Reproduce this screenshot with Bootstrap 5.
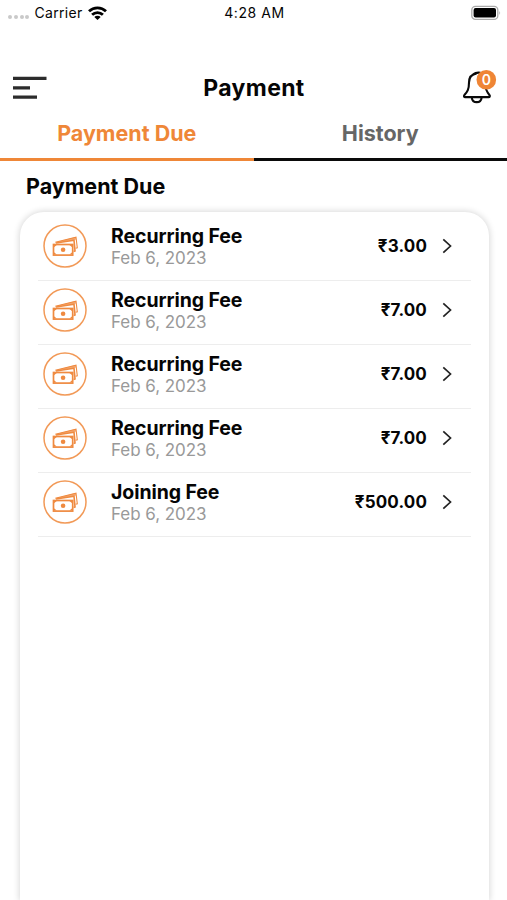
<!DOCTYPE html>
<html lang="en">
<head>
<meta charset="utf-8">
<meta name="viewport" content="width=device-width, initial-scale=1">
<title>Payment</title>
<link href="https://cdn.jsdelivr.net/npm/bootstrap@5.3.0/dist/css/bootstrap.min.css" rel="stylesheet">
<style>
  body { font-family: Inter, "Liberation Sans", sans-serif; color: #050505; background: #fff; height: 900px; overflow: hidden; }
  svg { display: block; flex: none; }
  .status-bar { height: 26px; padding: 0 6px 0 8px; font-size: 14px; line-height: 26px; letter-spacing: .35px; }
  .clock { letter-spacing: .6px; }
  .status-side { flex: 1 1 0; }
  .dots { gap: 1.8px; margin-right: 5px; }
  .dots i { width: 4px; height: 4px; border-radius: 50%; background: #c9c9c9; }
  .top-bar { height: 92px; padding: 32px 9px 0 13px; }
  .page-title { font-size: 23px; font-weight: 700; line-height: 28px; letter-spacing: .35px; padding-right: 3px; }
  .tab-row { height: 43px; }
  .tab-row .nav-link { height: 43px; padding: 0; border-radius: 0; border-bottom: 3px solid #0a0a0a; color: #666; font-size: 21.5px; font-weight: 700; line-height: 30px; letter-spacing: 0; }
  .tab-row .nav-link.active { color: #ef8738; border-color: #ef8738; }
  .section-title { font-size: 21.5px; font-weight: 700; line-height: 28px; letter-spacing: 0; padding: 11px 26px 0; margin-bottom: 12px; }
  .fee-card { flex: 1; margin: 0 18px 0 20px; padding: 5px 18px 0; border: 0; border-radius: 24px 24px 0 0; box-shadow: 0 0 6px 1px rgba(0,0,0,.15); }
  .list-group-flush > .fee-row { height: 64px; padding: 0 19px 6px 5px; border: 0; border-radius: 0; border-bottom: 1px solid #ededed; color: inherit; background: transparent; }
  .list-group-flush > .fee-row:last-child { border-bottom-width: 1px; }
  .fee-name { font-size: 19.5px; font-weight: 700; line-height: 22px; letter-spacing: -.08px; }
  .fee-date { font-size: 17px; line-height: 22px; letter-spacing: -.05px; color: #999; }
  .fee-text { margin-left: 24px; padding-top: 2px; }
  .fee-sum { font-size: 17px; font-weight: 700; margin-right: 15px; padding-top: 2px; letter-spacing: .15px; }
</style>
<script src="https://cdn.jsdelivr.net/npm/bootstrap@5.3.0/dist/js/bootstrap.bundle.min.js"></script>
</head>
<body class="d-flex flex-column">
<svg width="0" height="0" class="position-absolute" aria-hidden="true">
  <symbol id="cash" viewBox="0 0 44 44">
    <circle cx="22" cy="22" r="21" fill="none" stroke="#f29a58" stroke-width="1.5"/>
    <path fill="#f4ab75" d="M12.5 18.2 L32.6 13 L33.2 15.5 L18 18Z"/>
    <g fill="none" stroke="#ef8a40">
      <path d="M12.3 18.2 L33 13.2 L34.3 23.8 L32.6 24.3" stroke-width="1.1"/>
      <path d="M13 19 L31 16.2 L32 27 L30.6 27.4" stroke-width="1.6"/>
      <rect x="10.5" y="20.5" width="19.2" height="10.6" stroke-width="1.7"/>
    </g>
    <path fill="#ef8a40" d="M11 21h2.8l-2.8 2.3zM29.2 21h-2.8l2.8 2.3zM11 30.6h2.8l-2.8-2.3zM29.2 30.6h-2.8l2.8-2.3z"/>
    <circle cx="20.1" cy="25.8" r="2.3" fill="#ef8a40"/>
  </symbol>
  <symbol id="chev" viewBox="0 0 10 16"><path d="M1.3 1.3 L8.5 8 L1.3 14.7" fill="none" stroke="#222" stroke-width="1.7"/></symbol>
</svg>

<div class="status-bar d-flex align-items-center">
  <div class="status-side d-flex align-items-center">
    <span class="dots d-flex pt-2"><i></i><i></i><i></i><i></i></span>
    <span>Carrier</span>
    <svg class="ms-1" width="21" height="15" viewBox="0 0 20 15"><g fill="none" stroke="#000" stroke-width="2.8"><path d="M1.5 5.3 A12.2 12.2 0 0 1 18.5 5.3"/><path d="M4.6 8.7 A7.8 7.8 0 0 1 15.4 8.7"/></g><path d="M10 14 L6.8 11 A4.6 4.6 0 0 1 13.2 11Z"/></svg>
  </div>
  <span class="clock">4:28 AM</span>
  <div class="status-side d-flex justify-content-end">
    <svg width="30" height="16" viewBox="0 0 30 16"><rect x=".8" y="1.3" width="26" height="13" rx="3.6" fill="#fff" stroke="#aaa" stroke-width="1.3"/><rect x="2.6" y="3.1" width="22.4" height="9.4" rx="2"/><path d="M28.3 5.7 Q30 7.8 28.3 9.9Z" fill="#aaa"/></svg>
  </div>
</div>

<header class="top-bar d-flex justify-content-between align-items-center">
  <svg width="36" height="24" viewBox="0 0 36 24" fill="#2c2c2c"><path d="M0 .8h33.5v3.2H0zM0 10.3h17v3.2H0zM0 19.6h24v3.2H0z"/></svg>
  <h1 class="page-title m-0">Payment</h1>
  <svg width="36" height="36" viewBox="0 0 36 36">
    <path d="M14.7 3.4 C9.5 4.3 7 8 7 12.5 C7 19.5 5.4 21.7 2.4 25 C1.6 26.2 2 27.1 3.3 27.1 H26.5 C27.8 27.1 28.3 26.1 27.4 25 C25 22.1 23.6 20.3 23.2 14.5 M11.2 4.4 C13.4 2.6 15 2.2 18.5 2.8 M9.8 27.8 C10.5 33.6 18.9 33.6 19.6 27.8" fill="none" stroke="#0a0a0a" stroke-width="2.1" stroke-linejoin="round"/>
    <circle cx="24.3" cy="9.8" r="9.8" fill="#ef8535"/>
    <text x="24.3" y="14.6" text-anchor="middle" font-family="Inter, sans-serif" font-size="14" font-weight="600" fill="#fff">0</text>
  </svg>
</header>

<nav class="tab-row nav nav-justified flex-nowrap">
  <a class="nav-link active" href="#">Payment Due</a>
  <a class="nav-link" href="#">History</a>
</nav>

<h2 class="section-title">Payment Due</h2>

<main class="fee-card card">
  <div class="list-group list-group-flush rounded-0">
    <a href="#" class="fee-row list-group-item d-flex align-items-center"><svg width="44" height="44"><use href="#cash"/></svg><div class="fee-text flex-grow-1"><div class="fee-name">Recurring Fee</div><div class="fee-date">Feb 6, 2023</div></div><span class="fee-sum">₹3.00</span><svg width="10" height="16"><use href="#chev"/></svg></a>
    <a href="#" class="fee-row list-group-item d-flex align-items-center"><svg width="44" height="44"><use href="#cash"/></svg><div class="fee-text flex-grow-1"><div class="fee-name">Recurring Fee</div><div class="fee-date">Feb 6, 2023</div></div><span class="fee-sum">₹7.00</span><svg width="10" height="16"><use href="#chev"/></svg></a>
    <a href="#" class="fee-row list-group-item d-flex align-items-center"><svg width="44" height="44"><use href="#cash"/></svg><div class="fee-text flex-grow-1"><div class="fee-name">Recurring Fee</div><div class="fee-date">Feb 6, 2023</div></div><span class="fee-sum">₹7.00</span><svg width="10" height="16"><use href="#chev"/></svg></a>
    <a href="#" class="fee-row list-group-item d-flex align-items-center"><svg width="44" height="44"><use href="#cash"/></svg><div class="fee-text flex-grow-1"><div class="fee-name">Recurring Fee</div><div class="fee-date">Feb 6, 2023</div></div><span class="fee-sum">₹7.00</span><svg width="10" height="16"><use href="#chev"/></svg></a>
    <a href="#" class="fee-row list-group-item d-flex align-items-center"><svg width="44" height="44"><use href="#cash"/></svg><div class="fee-text flex-grow-1"><div class="fee-name">Joining Fee</div><div class="fee-date">Feb 6, 2023</div></div><span class="fee-sum">₹500.00</span><svg width="10" height="16"><use href="#chev"/></svg></a>
  </div>
</main>
</body>
</html>
